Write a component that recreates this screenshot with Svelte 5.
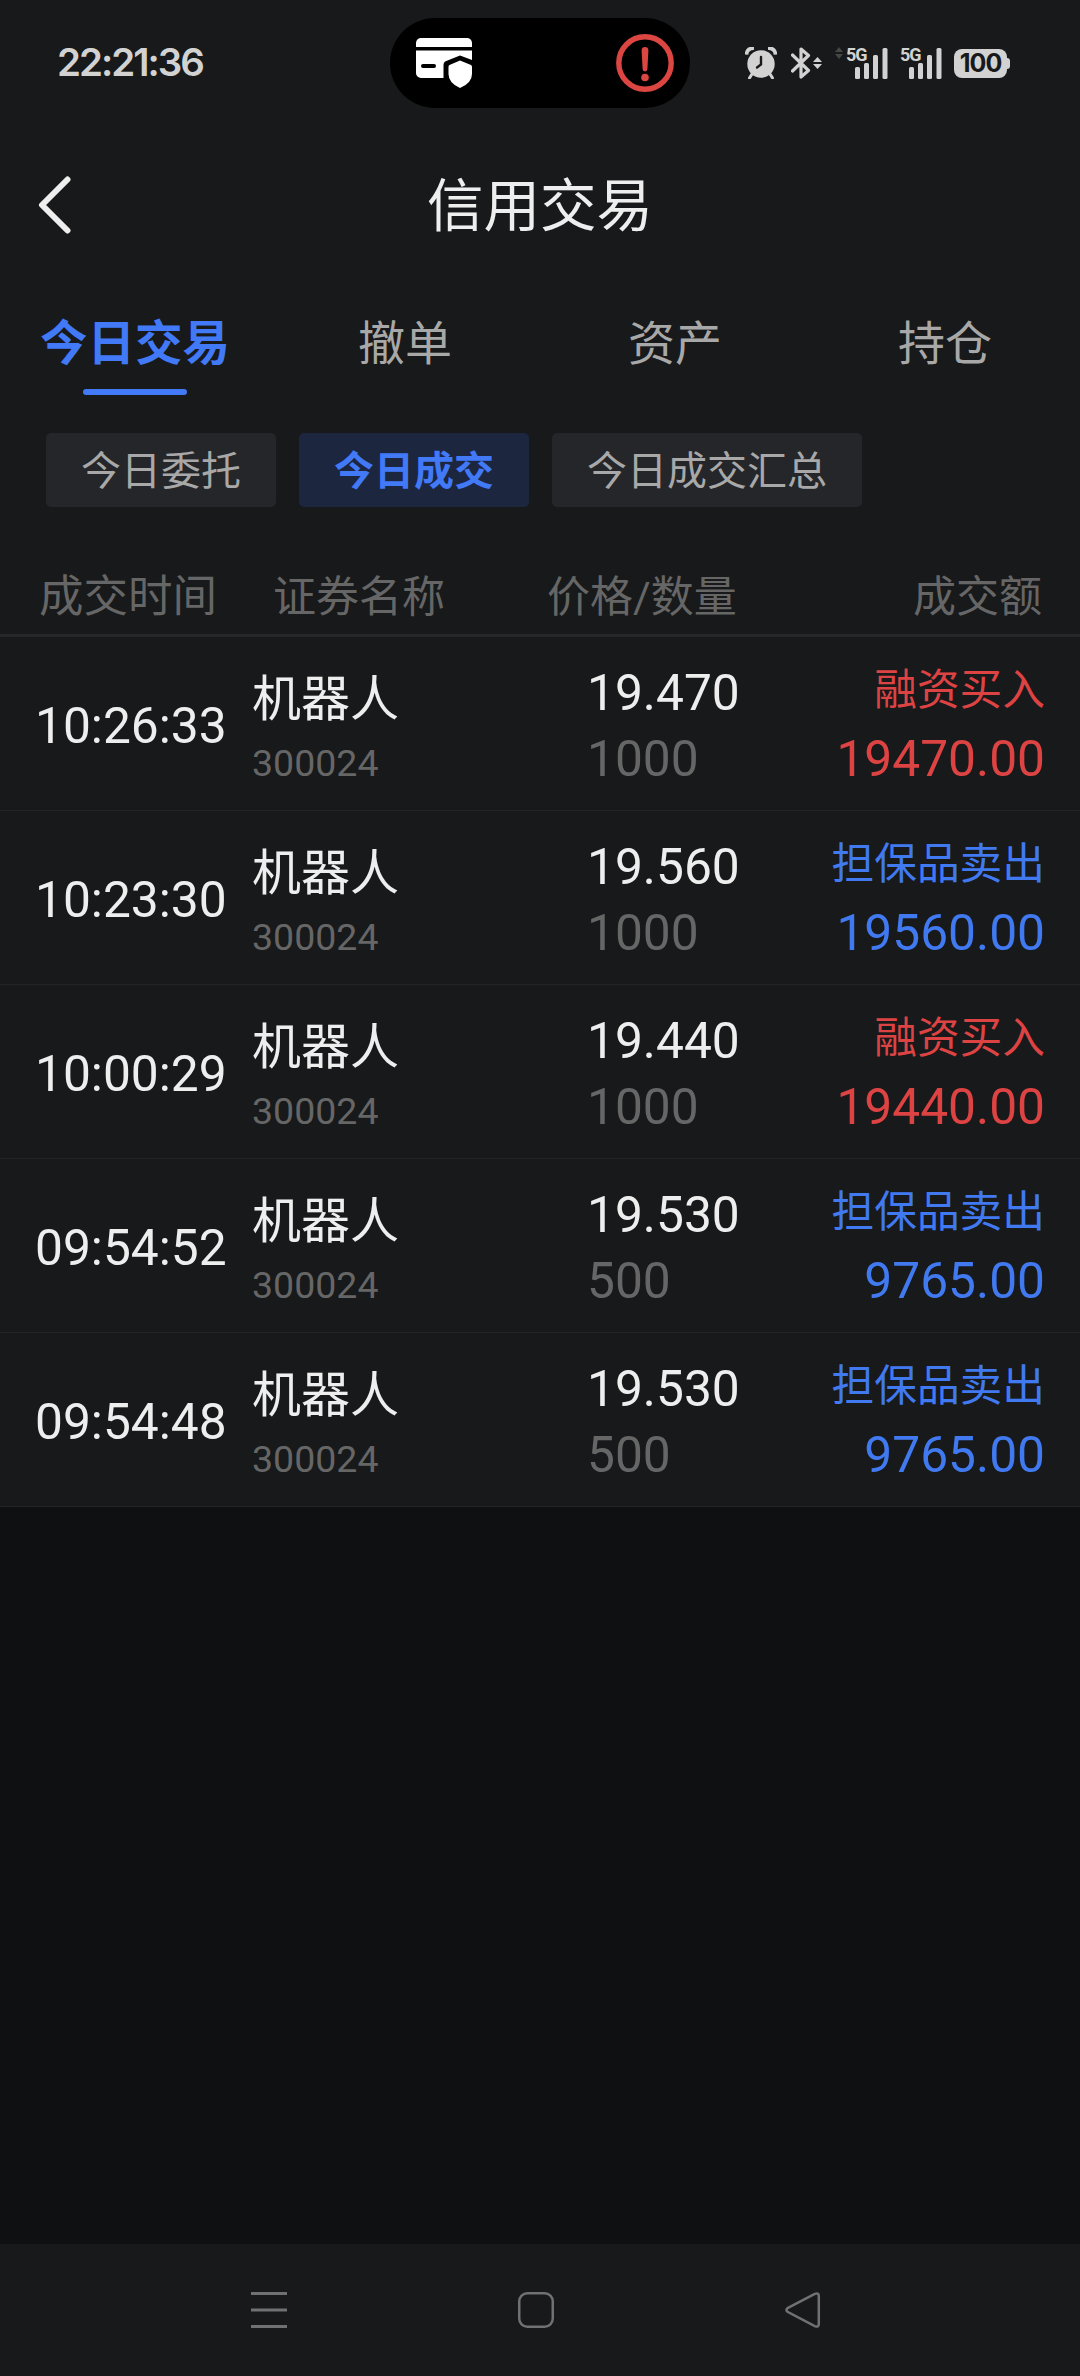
<script lang="ts">
  type Deal = {
    time: string;
    name: string;
    code: string;
    price: string;
    count: number;
    action: string;
    amount: string;
    side: "buy" | "sell";
  };

  const tabs = ["今日交易", "撤单", "资产", "持仓"];
  const filters = ["今日委托", "今日成交", "今日成交汇总"];

  let activeTab = $state(0);
  let activeFilter = $state(1);

  const deals: Deal[] = [
    { time: "10:26:33", name: "机器人", code: "300024", price: "19.470", count: 1000, action: "融资买入", amount: "19470.00", side: "buy" },
    { time: "10:23:30", name: "机器人", code: "300024", price: "19.560", count: 1000, action: "担保品卖出", amount: "19560.00", side: "sell" },
    { time: "10:00:29", name: "机器人", code: "300024", price: "19.440", count: 1000, action: "融资买入", amount: "19440.00", side: "buy" },
    { time: "09:54:52", name: "机器人", code: "300024", price: "19.530", count: 500, action: "担保品卖出", amount: "9765.00", side: "sell" },
    { time: "09:54:48", name: "机器人", code: "300024", price: "19.530", count: 500, action: "担保品卖出", amount: "9765.00", side: "sell" },
  ];
</script>

{#snippet signal()}
  <span class="signal">
    <span class="signal__type">5G</span>
    <svg width="33" height="31" viewBox="0 0 33 31" fill="currentColor">
      <rect x="0" y="19" width="5" height="12" rx="1.5" />
      <rect x="9" y="15" width="5" height="16" rx="1.5" />
      <rect x="18" y="7" width="5" height="24" rx="1.5" />
      <rect x="27.5" y="0" width="5" height="31" rx="1.5" />
    </svg>
  </span>
{/snippet}

<div class="screen">
  <header class="status">
    <span class="status__clock">22:21:36</span>

    <div class="island">
      <svg width="56" height="51" viewBox="0 0 56 51">
        <path d="M0 9V5a5 5 0 0 1 5-5h46a5 5 0 0 1 5 5v4z" fill="#fff" />
        <path d="M0 12.500h56V22L44 17.500 29 23.500Q27.500 24.500 27.500 27V40H5a5 5 0 0 1-5-5z" fill="#fff" />
        <path d="M7 28h11" stroke="#000" stroke-width="4" stroke-linecap="round" />
        <path d="M44 22.500 55 27Q56 27.400 56 29V36Q56 45 44 50 32.500 45 32.500 36V29Q32.500 27.400 33.500 27z" fill="#fff" />
      </svg>
      <svg width="58" height="58" viewBox="0 0 58 58">
        <circle cx="29" cy="29" r="26.200" fill="none" stroke="#db4542" stroke-width="5.400" />
        <path d="M25.600 16.500a3.400 3.400 0 0 1 6.800 0L31.400 35a2.400 2.400 0 0 1-4.800 0z" fill="#db4542" />
        <circle cx="29" cy="43.500" r="3.800" fill="#db4542" />
      </svg>
    </div>

    <div class="status__icons">
      <svg width="32" height="32" viewBox="0 0 32 32">
        <path d="M7 27 4.500 31M25 27l2.500 4" stroke="currentColor" stroke-width="3" stroke-linecap="round" />
        <circle cx="16" cy="17" r="13.700" fill="currentColor" />
        <path d="M1.500 7.500Q2 1 9 1.200M30.500 7.500Q30 1 23 1.200" stroke="currentColor" stroke-width="3.600" fill="none" />
        <path d="M16 10v7.500l-4 3" stroke="#17191a" stroke-width="2.400" fill="none" stroke-linecap="round" />
      </svg>
      <svg class="bluetooth" width="31" height="32" viewBox="0 0 31 32">
        <path d="M1.500 8 17.500 23.500 10 30V2l7.500 6.500L1.500 24" stroke="currentColor" stroke-width="3.200" fill="none" stroke-linejoin="round" stroke-linecap="round" />
        <path d="m26.500 10 4.500 5h-9zM26.500 22l-4.500-5h9z" fill="currentColor" />
      </svg>
      <svg class="data-arrows" width="8" height="32" viewBox="0 0 8 32">
        <path d="m4 0 4 5H0zM4 12 0 7h8z" fill="#444648" />
      </svg>
      {@render signal()}
      {@render signal()}
      <span class="battery">100</span>
    </div>
  </header>

  <nav class="title-bar">
    <button class="back" aria-label="返回">
      <svg width="34" height="58" viewBox="0 0 34 58">
        <path d="M29.500 3.500 4 29l25.500 25.500" fill="none" stroke="currentColor" stroke-width="6" stroke-linecap="round" stroke-linejoin="round" />
      </svg>
    </button>
    <h1>信用交易</h1>
  </nav>

  <div class="tabs">
    {#each tabs as tab, i}
      <button class="tab" class:tab--active={i === activeTab} onclick={() => (activeTab = i)}>
        {tab}
      </button>
    {/each}
  </div>

  <div class="filters">
    {#each filters as filter, i}
      <button class="filter" class:filter--active={i === activeFilter} onclick={() => (activeFilter = i)}>
        {filter}
      </button>
    {/each}
  </div>

  <div class="table-head">
    <span class="table-head__time">成交时间</span>
    <span>证券名称</span>
    <span>价格/数量</span>
    <span>成交额</span>
  </div>

  <main>
    {#each deals as deal}
      <div class="row">
        <span class="row__time">{deal.time}</span>
        <div>
          <div class="row__name">{deal.name}</div>
          <div class="row__code">{deal.code}</div>
        </div>
        <div>
          <div class="row__price">{deal.price}</div>
          <div class="row__count">{deal.count}</div>
        </div>
        <div class="row__result {deal.side}">
          <div class="row__action">{deal.action}</div>
          <div class="row__amount">{deal.amount}</div>
        </div>
      </div>
    {/each}
  </main>

  <footer class="system-nav">
    <svg width="36" height="36" viewBox="0 0 36 36">
      <path d="M0 1.500h36M0 18h36M0 34.500h36" stroke="currentColor" stroke-width="3" />
    </svg>
    <svg width="36" height="36" viewBox="0 0 36 36">
      <rect x="1.250" y="1.250" width="33.500" height="33.500" rx="8" fill="none" stroke="currentColor" stroke-width="2.500" />
    </svg>
    <svg width="36" height="36" viewBox="0 0 36 36">
      <path d="M2.500 16.200 29.800 1.900Q33.800.3 33.800 4V32Q33.800 35.700 29.800 34.100L2.500 19.800Q.4 18 2.500 16.200z" fill="none" stroke="currentColor" stroke-width="2.500" />
    </svg>
  </footer>
</div>

<style>
  :global(body) {
    background: #0f1011;
  }

  .screen {
    display: flex;
    flex-direction: column;
    width: 1080px;
    height: 2376px;
    background: #0f1011;
    color: #eee;
    font-family: Roboto, "Noto Sans CJK SC", sans-serif;
  }

  svg {
    display: block;
    flex: none;
  }

  button {
    border: 0;
    padding: 0;
    background: none;
    color: inherit;
    font: inherit;
    cursor: pointer;
  }

  .status,
  .title-bar,
  .tabs,
  .filters,
  .table-head,
  .row,
  .system-nav {
    box-sizing: border-box;
    flex: none;
    background: #17191a;
  }

  .status {
    display: grid;
    grid-template-columns: 390px 300px 1fr;
    height: 120px;
    padding-top: 18px;
    color: #d2d2d2;
    font-family: Inter, sans-serif;
  }

  .status__clock {
    padding-left: 57px;
    font-size: 38.5px;
    font-weight: 600;
    line-height: 89px;
    letter-spacing: -2px;
  }

  .island {
    display: flex;
    align-items: center;
    justify-content: space-between;
    box-sizing: border-box;
    height: 90px;
    padding: 0 16px 0 26px;
    border-radius: 45px;
    background: #000;
  }

  .status__icons {
    display: flex;
    align-items: center;
    height: 90px;
    padding-left: 55px;
  }

  .bluetooth {
    margin-left: 14px;
  }

  .data-arrows {
    margin: 0 3px 0 13px;
  }

  .signal {
    display: flex;
    position: relative;
    margin-right: 12px;
    padding-left: 9px;
  }

  .signal__type {
    position: absolute;
    top: -1px;
    left: 0;
    font: 700 18px/15px Roboto, sans-serif;
    letter-spacing: -1px;
  }

  .battery {
    position: relative;
    width: 53px;
    height: 29px;
    border-radius: 8px;
    background: #d2d2d2;
    color: #17191a;
    font-size: 25px;
    font-weight: 700;
    line-height: 29px;
    letter-spacing: -1px;
    text-align: center;
  }

  .battery::after {
    content: "";
    position: absolute;
    top: 9px;
    right: -3px;
    width: 4px;
    height: 11px;
    border-radius: 0 3px 3px 0;
    background: #d2d2d2;
  }

  .title-bar {
    display: grid;
    grid-template-columns: 120px 1fr 120px;
    align-items: center;
    height: 170px;
  }

  .back {
    padding-left: 38px;
  }

  h1 {
    margin: 0;
    padding-top: 4px;
    font-size: 56.5px;
    font-weight: 400;
    line-height: 80px;
    text-align: center;
  }

  .tabs {
    display: grid;
    grid-template-columns: repeat(4, 1fr);
    height: 105px;
    color: #a8a8a8;
  }

  .tab {
    position: relative;
    height: 105px;
    font-size: 47px;
    line-height: 108px;
  }

  .tab--active {
    color: #4179f7;
    font-size: 47.5px;
    font-weight: 700;
  }

  .tab--active::after {
    content: "";
    position: absolute;
    bottom: 0;
    left: 83px;
    width: 104px;
    height: 6px;
    border-radius: 3px;
    background: #4179f7;
  }

  .filters {
    display: flex;
    gap: 23px;
    padding: 38px 46px 50px;
  }

  .filter {
    height: 74px;
    padding: 3px 35px 0;
    border-radius: 5px;
    background: #25262a;
    color: #a8a8a8;
    font-size: 40px;
    line-height: 71px;
  }

  .filter--active {
    background: #1c263f;
    color: #4179f7;
    font-weight: 700;
  }

  .table-head {
    display: grid;
    grid-template-columns: 234px 274px 1fr auto;
    height: 80px;
    padding: 0 38px 0 39px;
    border-bottom: 3px solid #262729;
    color: #666;
    font-size: 43px;
    line-height: 80px;
  }

  .table-head__time {
    font-size: 44.5px;
  }

  main {
    flex: 1;
  }

  .row {
    display: grid;
    grid-template-columns: 216px 335px 1fr auto;
    height: 174px;
    padding: 0 35px 0 36px;
    border-bottom: 1px solid #222426;
    font-size: 49.7px;
  }

  .row__time {
    margin-left: -1px;
    line-height: 179px;
  }

  .row__name {
    margin-top: 25px;
    font-size: 49px;
    line-height: 76px;
  }

  .row__code {
    color: #666;
    font-size: 37.500px;
    line-height: 50px;
  }

  .row__price {
    margin-top: 23px;
    line-height: 66px;
  }

  .row__count {
    color: #666;
    line-height: 66px;
  }

  .row__result {
    text-align: right;
  }

  .row__action {
    margin-top: 19px;
    font-size: 42.7px;
    line-height: 69px;
  }

  .row__amount {
    margin-top: 1px;
    line-height: 66px;
  }

  .buy {
    color: #de4344;
  }

  .sell {
    color: #4179f0;
  }

  .system-nav {
    display: flex;
    align-items: center;
    justify-content: space-between;
    height: 132px;
    padding: 0 259px 0 251px;
    color: #707172;
  }
</style>
